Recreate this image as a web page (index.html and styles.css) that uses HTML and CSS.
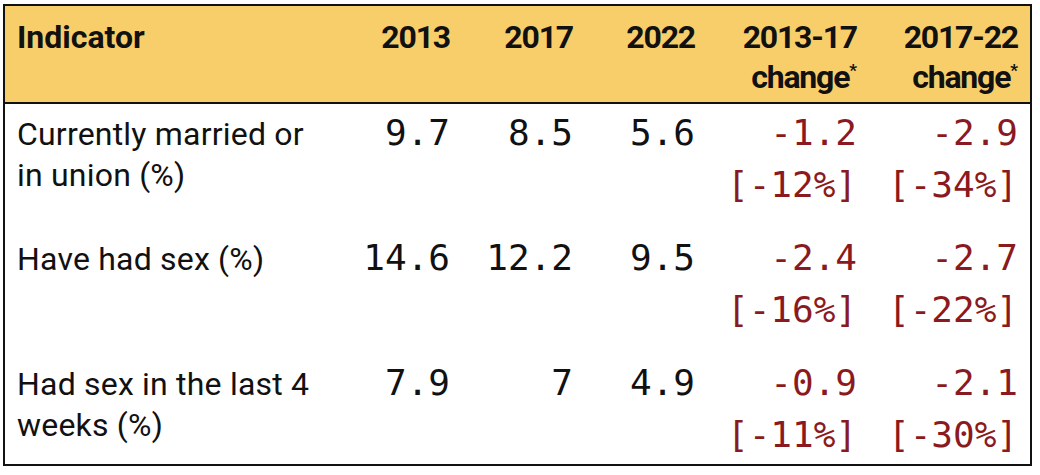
FILE: index.html
```html
<!DOCTYPE html>
<html lang="en">
<head>
<meta charset="utf-8">
<title>Indicator table</title>
<link rel="stylesheet" href="styles.css">
</head>
<body>
<table class="data">
  <colgroup>
    <col class="c-ind">
    <col class="c-y1">
    <col class="c-y2">
    <col class="c-y3">
    <col class="c-ch1">
    <col class="c-ch2">
  </colgroup>
  <thead>
    <tr>
      <th class="left">Indicator</th>
      <th>2013</th>
      <th>2017</th>
      <th>2022</th>
      <th>2013-17<br>change<sup>*</sup></th>
      <th>2017-22<br>change<sup>*</sup></th>
    </tr>
  </thead>
  <tbody>
    <tr>
      <td class="label">Currently married or in union (%)</td>
      <td class="num">9.7</td>
      <td class="num">8.5</td>
      <td class="num">5.6</td>
      <td class="num neg">-1.2<br>[-12%]</td>
      <td class="num neg">-2.9<br>[-34%]</td>
    </tr>
    <tr>
      <td class="label">Have had sex (%)</td>
      <td class="num">14.6</td>
      <td class="num">12.2</td>
      <td class="num">9.5</td>
      <td class="num neg">-2.4<br>[-16%]</td>
      <td class="num neg">-2.7<br>[-22%]</td>
    </tr>
    <tr class="last">
      <td class="label">Had sex in the last 4 weeks (%)</td>
      <td class="num">7.9</td>
      <td class="num">7</td>
      <td class="num">4.9</td>
      <td class="num neg">-0.9<br>[-11%]</td>
      <td class="num neg">-2.1<br>[-30%]</td>
    </tr>
  </tbody>
</table>
</body>
</html>
```

FILE: styles.css
```css
html, body {
  margin: 0;
  padding: 0;
  background: #ffffff;
}

body {
  padding: 4px 0 0 3px;
  font-family: Roboto, "Liberation Sans", sans-serif;
  color: #111111;
}

.data {
  width: 1029px;
  table-layout: fixed;
  border-collapse: separate;
  border-spacing: 0;
  border: 2px solid #111111;
}

.c-ind { width: 334px; }
.c-y1 { width: 123px; }
.c-y2 { width: 123px; }
.c-y3 { width: 122px; }
.c-ch1 { width: 162px; }
.c-ch2 { width: 161px; }

.data th {
  background: #f8ce6a;
  font-weight: 700;
  font-size: 32px;
  line-height: 40px;
  text-align: right;
  vertical-align: top;
  padding: 11px 12px 5px;
  border-bottom: 2px solid #111111;
  letter-spacing: -1.2px;
}

.data th.left {
  text-align: left;
  letter-spacing: 0;
}

.data th sup {
  font-size: 17px;
  line-height: 0;
  vertical-align: 12px;
  letter-spacing: 0;
}

.data td {
  padding: 3px 12px 18px;
  vertical-align: baseline;
}

.data tr.last td {
  padding-bottom: 3px;
}

.label {
  font-size: 32px;
  line-height: 41px;
  text-align: left;
  letter-spacing: 0.2px;
}

.num {
  font-family: "DejaVu Sans Mono", "Liberation Mono", monospace;
  font-size: 36px;
  line-height: 52px;
  text-align: right;
  color: #111111;
}

.neg {
  color: #8b1a20;
}
```
